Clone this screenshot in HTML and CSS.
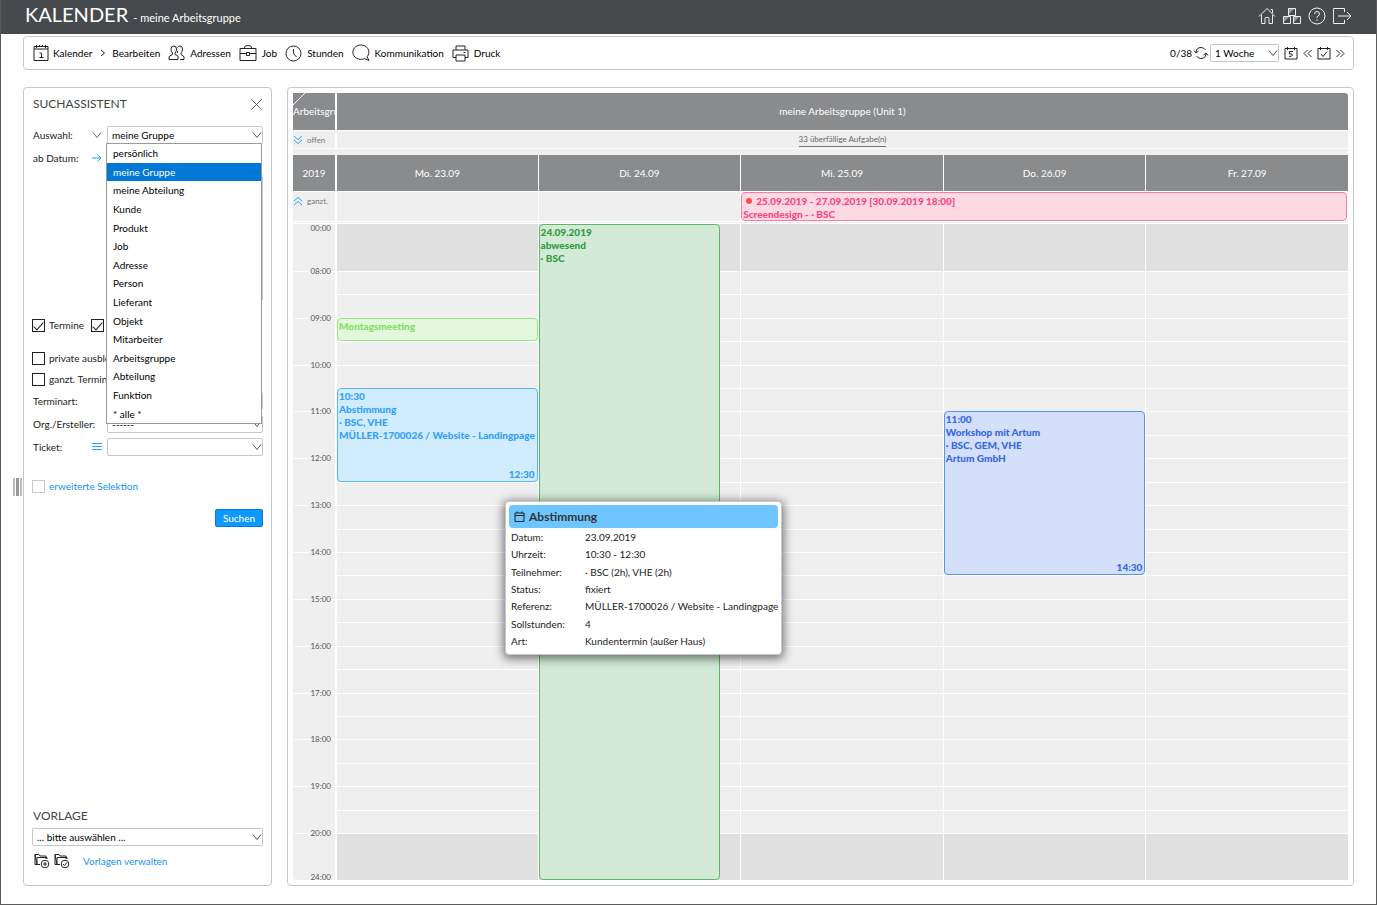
FILE: index.html
```html
<!DOCTYPE html>
<html lang="de">
<head>
<meta charset="utf-8">
<title>Kalender - meine Arbeitsgruppe</title>
<link rel="stylesheet" href="styles.css">
</head>
<body>
<svg class="defs" aria-hidden="true">
  <symbol id="chevron" viewBox="0 0 10 10"><path d="M1 2.5 5 7.5 9 2.5"/></symbol>
</svg>

<header class="topbar">
  <h1 class="title">KALENDER <span class="subtitle">- meine Arbeitsgruppe</span></h1>
  <nav class="topicons" aria-label="System">
    <a href="#" aria-label="Start"><svg class="icon" width="18" height="18" viewBox="0 0 18 18"><path d="M1 9.5 9 1.5 17 9.5M3.5 8V16.5H7V11.5Q7 10.5 8 10.5H10Q11 10.5 11 11.5V16.5H14.5V8M12.5 2.5H14.5V6"/></svg></a>
    <a href="#" aria-label="Module"><svg class="icon" width="20" height="18" viewBox="0 0 20 18"><path d="M6.5 1.500H13.500V8.500H6.500ZM1.500 9.500H8.500V16.500H1.500ZM11.500 9.500H18.500V16.500H11.500Z"/><path class="shade" d="M7 2H12L7 7ZM2 10H7L2 15ZM12 10H17L12 15Z"/></svg></a>
    <a href="#" aria-label="Hilfe"><svg class="icon" width="18" height="18" viewBox="0 0 18 18"><circle cx="9" cy="9" r="8"/><path d="M6.500 7Q6.500 4.500 9 4.500T11.500 7Q11.500 8.200 10 9T9 11M9 12.500V14"/></svg></a>
    <a href="#" aria-label="Abmelden"><svg class="icon" width="20" height="18" viewBox="0 0 20 18"><path d="M12.500 5V1.500H1.500V16.500H12.500V13M6 9H19M15 5 19 9 15 13"/></svg></a>
  </nav>
</header>

<div class="toolbar">
  <nav class="menu" aria-label="Module">
    <a href="#" class="item item-cal"><svg class="icon" width="16" height="18" viewBox="0 0 16 18"><path d="M1 5V16.500H15V2.500H1V5H15M3.500 1V4M6.500 1V3M9.500 1V3M12.500 1V4M6.500 9H8.500V13.500M6.500 13.500H10.500"/></svg>Kalender</a>
    <a href="#" class="item item-edit"><svg class="icon" width="6" height="8" viewBox="0 0 6 8"><path d="M1 1 4.500 4 1 7"/></svg>Bearbeiten</a>
    <a href="#" class="item"><svg class="icon" width="17" height="16" viewBox="0 0 17 16"><path d="M1 14.500V12Q1 11 4.500 9.500V8Q3 6.500 3 4Q3 1 5.800 1T8.500 4Q8.500 6.500 7 8V9.500Q9 10.300 10 11V14.500ZM9.500 2.500Q10 1 12 1Q14.500 1 14.500 4Q14.500 6.500 13 8V9.500Q16 11 16 12V14.500H12M9.500 8V6"/></svg>Adressen</a>
    <a href="#" class="item"><svg class="icon" width="18" height="18" viewBox="0 0 18 18"><path d="M1 4.500H17V16.500H1ZM1 9.500H7.500M10.500 9.500H17M7.500 8.500H10.500V11.500H7.500ZM5 4.500Q5 1.500 9 1.500T13 4.500"/></svg>Job</a>
    <a href="#" class="item"><svg class="icon" width="17" height="17" viewBox="0 0 17 17"><circle cx="8.500" cy="8.500" r="7.500"/><path d="M8.500 4V8.500L11.500 12"/></svg>Stunden</a>
    <a href="#" class="item"><svg class="icon" width="18" height="18" viewBox="0 0 18 18"><path d="M12.500 14.600A8 7.200 0 1 1 15 12.800L17 16.500Z"/></svg>Kommunikation</a>
    <a href="#" class="item"><svg class="icon" width="17" height="17" viewBox="0 0 17 17"><path d="M4 5V1H13V5M4 12.500H1V5H16V12.500H13M4 10H13V16H4ZM11.500 7.500H13.500"/></svg>Druck</a>
  </nav>
  <div class="range">
    <div class="counter">
      <span>0/38</span>
      <button class="iconbtn" aria-label="Aktualisieren"><svg class="icon" width="16" height="14" viewBox="0 0 16 14"><path d="M3 6Q3.500 1.500 8 1.500Q11 1.500 12.500 4M13 8Q12.500 12.500 8 12.500Q5 12.500 3.500 10M1 4.500 3 7 5.500 5M10.500 9 13 7 15 9.500"/></svg></button>
      <span class="selectbox range-select"><select aria-label="Zeitraum"><option>1 Woche</option></select><svg class="arrow"><use href="#chevron"/></svg></span>
    </div>
    <button class="iconbtn" aria-label="Heute"><svg class="icon" width="14" height="14" viewBox="0 0 14 14"><path d="M1 2.500H13V13H1ZM3.500 1V4M10.500 1V4M9 5.500H5.500V8Q8.500 7.500 8.500 9T5 10.500"/></svg></button>
    <button class="iconbtn" aria-label="Zurück"><svg class="icon" width="9" height="9" viewBox="0 0 9 9"><path d="M4.500 1 1 4.500 4.500 8M8.500 1 5 4.500 8.500 8"/></svg></button>
    <button class="iconbtn" aria-label="Datum wählen"><svg class="icon" width="14" height="14" viewBox="0 0 14 14"><path d="M1 2.500H13V13H1ZM3.500 1V4M10.500 1V4M4 8 6 10.500 10 5.500"/></svg></button>
    <button class="iconbtn" aria-label="Weiter"><svg class="icon" width="9" height="9" viewBox="0 0 9 9"><path d="M.5 1 4 4.500.5 8M4.500 1 8 4.500 4.500 8"/></svg></button>
  </div>
</div>

<main class="main">
  <div class="handle"></div>

  <form class="panel side">
    <div class="side-head"><h2>SUCHASSISTENT</h2>
      <button type="button" class="iconbtn" aria-label="Schließen"><svg class="icon muted" width="13" height="13" viewBox="0 0 13 13"><path d="M1 1 12 12M12 1 1 12"/></svg></button></div>

    <div class="row">
      <label for="auswahl">Auswahl:</label>
      <svg class="icon muted" width="10" height="10"><use href="#chevron"/></svg>
      <div class="selectbox">
        <select id="auswahl"><option>meine Gruppe</option></select><svg class="arrow"><use href="#chevron"/></svg>
        <ul class="options" role="listbox" aria-label="Auswahl">
          <li role="option">persönlich</li>
          <li role="option" class="active" aria-selected="true">meine Gruppe</li>
          <li role="option">meine Abteilung</li>
          <li role="option">Kunde</li>
          <li role="option">Produkt</li>
          <li role="option">Job</li>
          <li role="option">Adresse</li>
          <li role="option">Person</li>
          <li role="option">Lieferant</li>
          <li role="option">Objekt</li>
          <li role="option">Mitarbeiter</li>
          <li role="option">Arbeitsgruppe</li>
          <li role="option">Abteilung</li>
          <li role="option">Funktion</li>
          <li role="option">* alle *</li>
        </ul>
      </div>
    </div>
    <div class="row">
      <label for="datum">ab Datum:</label>
      <svg class="icon blue" width="10" height="10" viewBox="0 0 10 10"><path d="M0 5H9M5.500 1.500 9 5 5.500 8.500"/></svg>
      <input id="datum" class="date" type="text">
    </div>
    <div class="row"><textarea class="members" aria-label="Auswahlliste"></textarea></div>

    <div class="checks">
      <label><input type="checkbox" checked>Termine</label>
      <label><input type="checkbox" checked aria-label="Aufgaben"></label>
    </div>
    <div class="checks checks-tight">
      <label><input type="checkbox">private ausblenden</label>
    </div>
    <div class="checks checks-tight">
      <label><input type="checkbox">ganzt. Termine</label>
    </div>

    <div class="row">
      <label for="art">Terminart:</label>
      <span class="selectbox wide"><select id="art"><option></option></select><svg class="arrow"><use href="#chevron"/></svg></span>
    </div>
    <div class="row">
      <label for="org">Org./Ersteller:</label>
      <span class="selectbox wide"><select id="org"><option>------</option></select><svg class="arrow"><use href="#chevron"/></svg></span>
    </div>
    <div class="row">
      <label for="ticket">Ticket:</label>
      <svg class="icon blue" width="10" height="10" viewBox="0 0 10 10"><path d="M0 1.500H10M0 4.500H10M0 7.500H10"/></svg>
      <span class="selectbox"><select id="ticket"><option></option></select><svg class="arrow"><use href="#chevron"/></svg></span>
    </div>

    <div class="checks extended">
      <label><input type="checkbox" class="pale">erweiterte Selektion</label>
    </div>
    <button type="button" class="search">Suchen</button>

    <section class="template">
      <h2>VORLAGE</h2>
      <span class="selectbox"><select aria-label="Vorlage"><option>... bitte auswählen ...</option></select><svg class="arrow"><use href="#chevron"/></svg></span>
      <div class="template-actions">
        <button type="button" class="iconbtn" aria-label="Vorlage hinzufügen"><svg class="icon" width="16" height="16" viewBox="0 0 16 16"><path d="M6 11.500H3L1 1.500H5L6 3H12V6M1 1.500V11.500H6M3 11.500V4.500H13V6"/><circle cx="11" cy="11" r="3.800"/><path d="M11 9V13M9 11H13"/></svg></button>
        <button type="button" class="iconbtn" aria-label="Vorlage speichern"><svg class="icon" width="16" height="16" viewBox="0 0 16 16"><path d="M6 11.500H3L1 1.500H5L6 3H12V6M1 1.500V11.500H6M3 11.500V4.500H13V6"/><circle cx="11" cy="11" r="3.800"/><path d="M9 11 10.500 12.500 13 9.500"/></svg></button>
        <a href="#">Vorlagen verwalten</a>
      </div>
    </section>
  </form>

  <section class="panel calendar">
    <div class="band group">
      <div class="head corner"><svg class="fold" width="14" height="12" viewBox="0 0 14 12"><path d="M0 12 12 0"/></svg>Arbeitsgruppe</div>
      <div class="head">meine Arbeitsgruppe (Unit 1)</div>
    </div>
    <div class="band open">
      <div class="cell side-label"><svg class="icon blue" width="8" height="8" viewBox="0 0 8 8"><path d="M0 0 4 3.500 8 0M0 4 4 7.500 8 4"/></svg>offen</div>
      <div class="cell center"><a href="#" class="overdue">33 überfällige Aufgabe(n)</a></div>
    </div>
    <div class="strip"></div>
    <div class="band days">
      <div class="head">2019</div><div class="head">Mo. 23.09</div><div class="head">Di. 24.09</div><div class="head">Mi. 25.09</div><div class="head">Do. 26.09</div><div class="head">Fr. 27.09</div>
    </div>
    <div class="band days allday">
      <div class="cell side-label"><svg class="icon blue" width="8" height="8" viewBox="0 0 8 8"><path d="M0 4 4 .5 8 4M0 8 4 4.500 8 8"/></svg>ganzt.</div>
      <div class="cell"></div><div class="cell"></div>
      <div class="event pink"><span class="dot"></span>25.09.2019 - 27.09.2019 [30.09.2019 18:00]<br>Screendesign - · BSC</div>
    </div>
    <div class="rule"></div>

    <div class="timegrid">
      <div class="axis">
        <time class="first">00:00</time><time>08:00</time><time>09:00</time><time>10:00</time><time>11:00</time><time>12:00</time><time>13:00</time><time>14:00</time><time>15:00</time><time>16:00</time><time>17:00</time><time>18:00</time><time>19:00</time><time>20:00</time><time class="last">24:00</time>
      </div>
      <div class="slots">
        <i class="off"></i>
        <i></i><i></i><i></i><i></i><i></i><i></i><i></i><i></i><i></i><i></i><i></i><i></i>
        <i></i><i></i><i></i><i></i><i></i><i></i><i></i><i></i><i></i><i></i><i></i><i></i>
        <i class="off"></i>
      </div>
      <div class="day mon">
        <div class="event lime meeting">Montagsmeeting</div>
        <div class="event sky sync">10:30<br>Abstimmung<br>· BSC, VHE<br>MÜLLER-1700026 / Website - Landingpage<span class="end">12:30</span></div>
      </div>
      <div class="day tue"><div class="event green absent">24.09.2019<br>abwesend<br>· BSC</div></div>
      <div class="day wed"></div>
      <div class="day thu"><div class="event indigo workshop">11:00<br>Workshop mit Artum<br>· BSC, GEM, VHE<br>Artum GmbH<span class="end">14:30</span></div></div>
      <div class="day fri"></div>

      <aside class="tooltip" role="tooltip">
        <h3><svg class="icon" width="11" height="11" viewBox="0 0 11 11"><path d="M1 2H10V10.500H1ZM1 4.500H10M3 .5V2M8 .5V2"/></svg>Abstimmung</h3>
        <dl>
          <dt>Datum:</dt><dd>23.09.2019</dd>
          <dt>Uhrzeit:</dt><dd>10:30 - 12:30</dd>
          <dt>Teilnehmer:</dt><dd>· BSC (2h), VHE (2h)</dd>
          <dt>Status:</dt><dd>fixiert</dd>
          <dt>Referenz:</dt><dd>MÜLLER-1700026 / Website - Landingpage</dd>
          <dt>Sollstunden:</dt><dd>4</dd>
          <dt>Art:</dt><dd>Kundentermin (außer Haus)</dd>
        </dl>
      </aside>
    </div>
  </section>
</main>
</body>
</html>
```

FILE: styles.css
```css
* { box-sizing: border-box; }

body {
  margin: 0;
  min-height: 100vh;
  display: flex;
  flex-direction: column;
  border: 1px solid #5a5a5a;
  border-width: 0 1px 1px;
  background: #fff;
  color: #222;
  font: 10px/14px Lato, "Open Sans", sans-serif;
}

h1, h2, h3, ul, dl, dd { margin: 0; padding: 0; font-weight: 400; }
a { color: inherit; text-decoration: none; }
button, select, input, textarea { font: inherit; color: #000; margin: 0; }

.defs { position: absolute; width: 0; height: 0; }
.icon { display: block; flex: none; fill: none; stroke: #222; stroke-width: 1; }
.muted { stroke: #666; }
.blue { stroke: #1ea7fd; }
.iconbtn { display: block; padding: 0; border: 0; background: none; }

/* Top bar */
.topbar {
  display: flex;
  align-items: center;
  justify-content: space-between;
  height: 34px;
  padding: 0 24px 2px;
  background: #474a4d;
  color: #fff;
}
.title { font-size: 20px; line-height: 24px; }
.subtitle { font-size: 11px; }
.topicons { display: flex; gap: 6px; }
.topicons .icon { stroke: #eee; }
.topicons .shade { fill: #999; stroke: none; }

/* Toolbar */
.toolbar {
  display: flex;
  align-items: center;
  justify-content: space-between;
  height: 34px;
  margin: 2px 22px 0;
  padding: 0 8px 0 9px;
  border: 1px solid #c4c8ce;
  border-radius: 4px;
  color: #000;
}
.menu, .range, .counter { display: flex; align-items: center; }
.menu { gap: 8px; }
.item { display: flex; align-items: center; gap: 5px; }
.item-cal { gap: 4px; }
.item-edit { gap: 6px; }
.range { gap: 5px; }
.counter { gap: 1px; }
.range-select { width: 69px; }

/* Form parts */
.selectbox { position: relative; display: block; }
select {
  display: block;
  width: 100%;
  height: 18px;
  padding: 0 4px;
  appearance: none;
  border: 1px solid #c4c8ce;
  border-radius: 2px;
  background: #fff;
}
.arrow {
  position: absolute;
  top: 4px;
  right: 1px;
  width: 10px;
  height: 10px;
  fill: none;
  stroke: #555;
  pointer-events: none;
}
.panel { border: 1px solid #c4c8ce; border-radius: 4px; }

/* Page body */
.main {
  flex: 1;
  display: grid;
  grid-template-columns: 10px 249px minmax(0, 1fr);
  padding: 17px 22px 18px 12px;
}
.handle {
  align-self: center;
  width: 9px;
  height: 18px;
  border: solid #bbb;
  border-width: 0 2px;
  background: linear-gradient(90deg, #fff 1px, #999 1px, #999 4px, #fff 4px);
}

/* Search panel */
.side { display: flex; flex-direction: column; padding: 8px; }
.side-head { display: flex; justify-content: space-between; margin-bottom: 14px; }
h2 { padding-left: 1px; font-size: 12px; line-height: 16px; color: #444; }
.row {
  display: grid;
  grid-template-columns: 60px 15px 1fr;
  align-items: center;
  margin-bottom: 5px;
}
.row label { padding-left: 1px; white-space: nowrap; }
.wide, .date, .members { grid-column: 3; }
.date { width: 90px; height: 18px; border: 1px solid #c4c8ce; }
.members { width: 100%; height: 123px; margin-top: 5px; border: 1px solid #c4c8ce; resize: none; display: block; }
.options {
  position: absolute;
  z-index: 2;
  top: 17px;
  left: -1px;
  width: 156px;
  height: 281px;
  display: grid;
  grid-template-rows: repeat(15, 1fr);
  border: 1px solid #999;
  background: #fff;
  color: #000;
  list-style: none;
}
.options li { display: flex; align-items: center; padding-left: 6px; }
.options .active { background: #0078d7; color: #fff; }

.checks { display: flex; gap: 7px; margin: 13px 0 19px; }
.checks label { display: flex; align-items: center; gap: 4px; height: 14px; white-space: nowrap; }
.checks-tight { margin: 0 0 7px; }
.checks-tight + .row { margin-top: -1px; }
.extended { margin: 18px 0 16px; color: #1590f5; }
input[type="checkbox"] {
  appearance: none;
  display: grid;
  place-items: center;
  width: 13px;
  height: 13px;
  border: 1px solid #222;
  background: #fff;
}
input[type="checkbox"]:checked::after {
  content: "";
  width: 4px;
  height: 9px;
  margin-bottom: 3px;
  border: solid #222;
  border-width: 0 1px 1px 0;
  rotate: 42deg;
}
input[type="checkbox"].pale { border-color: #c8c8c8; }
.search {
  align-self: flex-end;
  width: 48px;
  height: 18px;
  padding: 0;
  border: 1px solid #0a78d0;
  border-radius: 2px;
  background: #0d99ff;
  color: #fff;
}
.template { margin-top: auto; }
.template h2 { margin-bottom: 4px; }
.template-actions { display: flex; align-items: center; gap: 4px; margin: 7px 0 8px 2px; }
.template-actions a { margin-left: 9px; color: #1590f5; }

/* Calendar */
.calendar {
  display: flex;
  flex-direction: column;
  margin-left: 15px;
  padding: 5px;
}
.band { display: grid; grid-template-columns: 42px 1fr; column-gap: 2px; margin-bottom: 1px; }
.head {
  display: flex;
  align-items: center;
  justify-content: center;
  height: 36px;
  overflow: hidden;
  background: #8a8b8d;
  color: #fff;
}
.group .head { height: 37px; padding-bottom: 1px; }
.group .head:last-child { border-top-right-radius: 3px; }
.group .corner { position: relative; justify-content: flex-start; }
.fold { position: absolute; top: 0; left: 0; fill: none; stroke: #fff; }
.cell { background: #efefef; }
.side-label { display: flex; align-items: center; gap: 5px; padding-left: 1px; font-size: 8px; color: #777; }
.open { height: 17px; }
.center { display: flex; align-items: center; justify-content: center; }
.overdue { border-bottom: 1px solid #777; font-size: 8px; line-height: 13px; color: #666; }
.strip { height: 6px; background: #efefef; }
.days { grid-template-columns: 42px repeat(5, minmax(0, 1fr)); column-gap: 1px; }
.days > :nth-child(2) { margin-left: 1px; }
.allday { height: 29px; }
.allday .side-label { align-items: flex-start; padding-top: 2px; }
.allday .icon { margin-top: 3px; }
.allday .event { grid-column: 4 / 7; margin-right: 1px; padding-top: 2px; }
.rule { height: 1px; margin-bottom: 1px; background: #efefef; }

.timegrid {
  position: relative;
  flex: 1;
  display: grid;
  grid-template-columns: 42px repeat(5, minmax(0, 1fr));
  grid-template-rows: repeat(28, minmax(23px, 1fr));
  column-gap: 1px;
}
.axis {
  grid-area: 1 / 1 / -1 / 2;
  display: grid;
  grid-template-rows: repeat(14, minmax(0, 1fr));
  background: #efefef;
  border-bottom-left-radius: 3px;
  font-size: 8px;
  line-height: 10px;
  text-align: right;
  color: #555;
}
.axis time {
  height: 10px;
  margin-top: -5px;
  padding-right: 4px;
  background: linear-gradient(#fff, #fff) 0 5px / 16px 1px no-repeat,
              linear-gradient(#fff, #fff) 100% 5px / 3px 1px no-repeat;
}
.axis .first { margin-top: -1px; background: none; }
.axis .last { grid-row: 14; grid-column: 1; align-self: end; margin-bottom: -2px; background: none; }
.axis time:nth-last-child(2) { grid-row: 14; grid-column: 1; }

.slots {
  grid-area: 1 / 2 / -1 / -1;
  display: grid;
  grid-template-rows: subgrid;
  margin-left: 1px;
}
.slots i { border-top: 1px solid #fff; background: #efefef; }
.slots .off { grid-row: span 2; background: #e0e0e0; }
.slots .off:first-child { border-top: 0; }
.day {
  display: grid;
  grid-template-rows: subgrid;
  grid-row: 1 / -1;
  position: relative;
}
.day:not(.mon) { box-shadow: -1px 0 #fff; }
.mon { grid-column: 2; margin-left: 1px; }
.tue { grid-column: 3; }
.wed { grid-column: 4; }
.thu { grid-column: 5; }
.fri { grid-column: 6; }

.event {
  position: relative;
  overflow: hidden;
  padding: 1px 1px 0;
  border: 1px solid;
  border-radius: 4px;
  font-size: 10px;
  font-weight: 900;
  line-height: 13px;
  white-space: nowrap;
}
.end { position: absolute; right: 2px; bottom: 0; }
.dot { display: inline-block; width: 6px; height: 6px; margin: 0 4px 1px 3px; border-radius: 50%; background: #ff4d4d; }
.pink { border-color: #fb7ba3; background: #fdd9e3; color: #f8487f; }
.lime { border-color: #98e681; background: #e2f7dc; color: #83df64; }
.sky { border-color: #52b7f9; background: #d1ebff; color: #31a1fb; }
.green { border-color: #5bb76a; background: #d3ebd6; color: #2f9c3b; }
.indigo { border-color: #5c93f0; background: #d4dff9; color: #3568e8; }
.meeting { grid-row: 5 / span 1; }
.sync { grid-row: 8 / span 4; }
.absent { grid-row: 1 / -1; width: 90%; }
.workshop { grid-row: 9 / span 7; }

/* Event tooltip */
.tooltip {
  position: absolute;
  z-index: 1;
  top: 277px;
  left: 212px;
  padding: 3px;
  border: 1px solid #c4c8ce;
  border-radius: 4px;
  background: #fff;
  box-shadow: 0 2px 10px 2px rgba(0, 0, 0, .5);
}
.tooltip h3 {
  display: flex;
  align-items: center;
  gap: 4px;
  height: 23px;
  padding-left: 5px;
  border-radius: 4px;
  background: #6fc5ff;
  color: #333;
  font-size: 12px;
  font-weight: 700;
}
.tooltip dl {
  display: grid;
  grid-template-columns: 74px auto;
  grid-template-rows: repeat(7, 1fr);
  align-items: center;
  height: 123px;
  padding: 0 0 1px 2px;
  white-space: nowrap;
}
```
